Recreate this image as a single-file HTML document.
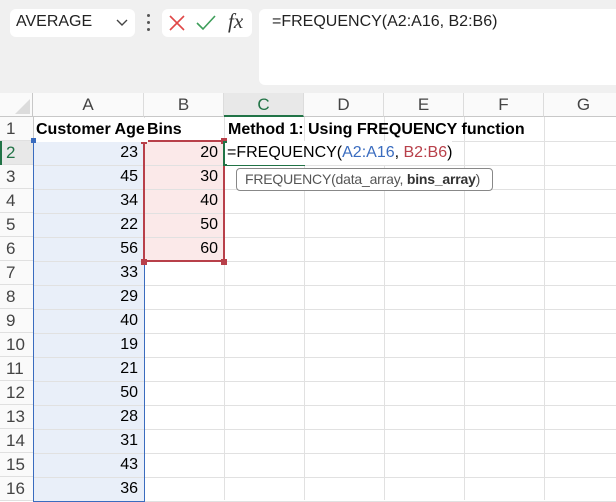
<!DOCTYPE html>
<html><head><style>
*{margin:0;padding:0;box-sizing:border-box}
body{width:616px;height:500px;overflow:hidden;background:#fff;font-family:"Liberation Sans",sans-serif;position:relative}
.a{position:absolute}
.top{left:0;top:0;width:616px;height:93px;background:#f0f0f0}
.box{background:#fff;border-radius:6px}
.ch{top:93px;height:24px;font-size:17px;color:#444;text-align:center;line-height:24px;border-right:1px solid #dcdcdc;border-bottom:1px solid #c8c8c8;background:#fafafa}
.rh{left:0;width:33px;height:24px;font-size:17px;color:#444;padding-left:6px;line-height:24px;border-bottom:1px solid #e0e0e0;background:#fafafa}
.gh{left:33px;width:583px;height:1px;background:#e1e1e1}
.gv{top:117px;width:1px;height:383px;background:#e1e1e1}
.c{font-size:16px;line-height:24px;height:24px;color:#000}
.n{text-align:right;padding-right:6px}
</style></head><body>
<div class="a top"></div>
<div class="a box" style="left:10px;top:9px;width:125px;height:28px"></div>
<div class="a" style="left:16px;top:13px;font-size:16px;color:#222">AVERAGE</div>
<svg class="a" style="left:116px;top:18px" width="12" height="10"><path d="M1 2 L6 7 L11 2" stroke="#444" stroke-width="1.4" fill="none"/></svg>
<div class="a" style="left:147px;top:14px;width:3px;height:3px;background:#555;border-radius:2px"></div>
<div class="a" style="left:147px;top:21px;width:3px;height:3px;background:#555;border-radius:2px"></div>
<div class="a" style="left:147px;top:28px;width:3px;height:3px;background:#555;border-radius:2px"></div>
<div class="a box" style="left:162px;top:9px;width:90px;height:28px"></div>
<svg class="a" style="left:169px;top:15px" width="16" height="16"><path d="M1 1 L15 15 M15 1 L1 15" stroke="#e04848" stroke-width="1.6"/></svg>
<svg class="a" style="left:196px;top:15px" width="20" height="16"><path d="M1 8 L7 14 L19 1" stroke="#3d9e5a" stroke-width="1.6" fill="none"/></svg>
<div class="a" style="left:228px;top:9px;font-family:'Liberation Serif',serif;font-style:italic;font-size:21px;color:#333">fx</div>
<div class="a box" style="left:259px;top:9px;width:370px;height:76px"></div>
<div class="a" style="left:272px;top:13px;font-size:16px;color:#222">=FREQUENCY(A2:A16, B2:B6)</div>

<div class="a" style="left:0;top:93px;width:33px;height:24px;background:#fafafa;border-right:1px solid #c8c8c8;border-bottom:1px solid #c8c8c8"></div>
<svg class="a" style="left:14px;top:98px" width="17" height="17"><path d="M16 1 L16 16 L1 16Z" fill="#dcdcdc"/></svg>
<div class="a ch" style="left:33px;width:111px">A</div>
<div class="a ch" style="left:144px;width:80px">B</div>
<div class="a ch" style="left:224px;width:80px;color:#217346;background:#e8e8e8;border-bottom:2px solid #217346">C</div>
<div class="a ch" style="left:304px;width:80px">D</div>
<div class="a ch" style="left:384px;width:80px">E</div>
<div class="a ch" style="left:464px;width:80px">F</div>
<div class="a ch" style="left:544px;width:80px">G</div>

<div class="a" style="left:33px;top:141px;width:111px;height:360px;background:#e9eff9"></div>
<div class="a" style="left:144px;top:141px;width:80px;height:120px;background:#fbe9e9"></div>

<div id="g"></div>
<script>
var h='';
for(var i=0;i<16;i++){var y=117+i*24;
h+='<div class="a rh" style="top:'+y+'px;'+(i==1?'color:#217346;background:#e8e8e8;':'')+'">'+(i+1)+'</div>';
h+='<div class="a gh" style="top:'+(y+24)+'px"></div>';}
[144,224,304,384,464,544].forEach(function(x){h+='<div class="a gv" style="left:'+x+'px"></div>'});
h+='<div class="a" style="left:33px;top:117px;width:1px;height:383px;background:#c8c8c8"></div>';
var A=[23,45,34,22,56,33,29,40,19,21,50,28,31,43,36];
A.forEach(function(v,i){h+='<div class="a c n" style="left:33px;top:'+(141+i*24)+'px;width:111px">'+v+'</div>'});
[20,30,40,50,60].forEach(function(v,i){h+='<div class="a c n" style="left:144px;top:'+(141+i*24)+'px;width:80px">'+v+'</div>'});
document.getElementById('g').innerHTML=h;
</script>
<div class="a" style="left:33px;top:140px;width:112px;height:362px;border:1.5px solid #3a6cbf"></div>
<div class="a" style="left:143px;top:140px;width:82px;height:122px;border:2px solid #b8404a"></div>
<div class="a" style="left:141px;top:138px;width:6px;height:6px;background:#b8404a"></div>
<div class="a" style="left:221px;top:138px;width:6px;height:6px;background:#b8404a"></div>
<div class="a" style="left:141px;top:259px;width:6px;height:6px;background:#b8404a"></div>
<div class="a" style="left:221px;top:259px;width:6px;height:6px;background:#b8404a"></div>
<div class="a" style="left:31px;top:138px;width:5px;height:5px;background:#3a6cbf"></div>
<div class="a" style="left:0;top:141px;width:2px;height:24px;background:#217346"></div>

<div class="a c" style="left:36px;top:118px;font-weight:bold;background:#fff;padding-right:3px">Customer Age</div>
<div class="a c" style="left:147px;top:118px;font-weight:bold">Bins</div>
<div class="a c" style="left:228px;top:118px;font-weight:bold;white-space:nowrap">Method 1: Using FREQUENCY function</div>
<div class="a" style="left:223px;top:141px;width:82px;height:25px;border:2px solid #217346;background:#fff"></div>
<div class="a c" style="left:227px;top:141px;white-space:nowrap;background:#fff">=FREQUENCY(<span style="color:#3a6cbf">A2:A16</span>, <span style="color:#b8404a">B2:B6</span>)</div>
<div class="a" style="left:236px;top:168px;width:257px;height:23px;border:1px solid #888;border-radius:4px;background:#fff;font-size:14px;line-height:21px;padding-left:8px;color:#555;white-space:nowrap;letter-spacing:-0.2px">FREQUENCY(data_array, <b style="color:#333">bins_array</b>)</div>
</body></html>
